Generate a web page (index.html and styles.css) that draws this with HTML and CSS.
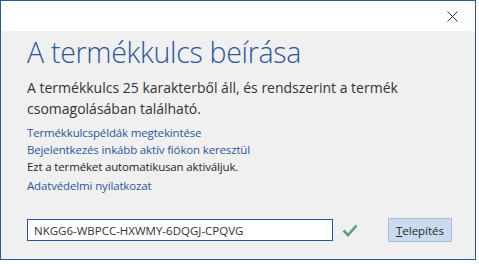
FILE: index.html
```html
<!DOCTYPE html>
<html lang="hu">
<head>
  <meta charset="UTF-8" />
  <title>A termékkulcs beírása</title>
  <link rel="stylesheet" href="styles.css">
</head>
<body>

  <div class="window">
    <!-- title bar -->
    <div class="titlebar">
      <svg class="close" width="11" height="11" viewBox="0 0 11 11">
        <path d="M0.5 0.5 L10.5 10.5 M10.5 0.5 L0.5 10.5" stroke="#333" stroke-width="1" fill="none"/>
      </svg>
    </div>

    <div class="content">
      <h1>A termékkulcs beírása</h1>
      <p class="intro">A termékkulcs 25 karakterből áll, és rendszerint a termék csomagolásában található.</p>

      <div class="links">
        <a href="#">Termékkulcspéldák megtekintése</a>
        <a href="#">Bejelentkezés inkább aktív fiókon keresztül</a>
        <span class="note">Ezt a terméket automatikusan aktiváljuk.</span>
        <a href="#" class="privacy">Adatvédelmi nyilatkozat</a>
      </div>

      <div class="key-row">
        <input type="text" class="key" value="NKGG6-WBPCC-HXWMY-6DQGJ-CPQVG" />
        <svg class="check" width="16" height="13" viewBox="0 0 16 13">
          <path d="M1.5 6.5 L6 11 L14.5 1.5" stroke="#5c9e80" stroke-width="2.6" fill="none"/>
        </svg>
        <button class="install"><u>T</u>elepítés</button>
      </div>
    </div>
  </div>

</body>
</html>
```

FILE: styles.css
```css
body {
  margin: 0;
  background: #ffffff;
  font-family: "Open Sans", "Noto Sans", sans-serif;
}
.window {
  width: 476px;
  height: 260px;
  box-sizing: border-box;
  border: 1px solid #2b579a;
  display: flex;
  flex-direction: column;
}
.titlebar {
  height: 30px;
  background: #ffffff;
  display: flex;
  justify-content: flex-end;
  align-items: center;
  padding-right: 17px;
}
.content {
  flex: 1;
  background: #f0f0f0;
  padding: 0 0 0 26px;
  display: flex;
  flex-direction: column;
}
h1 {
  margin: 3px 0 0 0;
  font-weight: 300;
  font-size: 28.5px;
  line-height: 36px;
  color: #2b579a;
  letter-spacing: -0.3px;
}
.intro {
  margin: 7px 0 0 0;
  width: 400px;
  font-size: 14px;
  line-height: 21px;
  color: #333333;
}
.links {
  margin-top: 5px;
  display: flex;
  flex-direction: column;
  font-size: 11.5px;
  line-height: 17px;
  letter-spacing: -0.15px;
}
.links a {
  color: #2b579a;
  text-decoration: none;
}
.note {
  color: #262626;
}
.links .privacy {
  margin-top: 2px;
}
.key-row {
  margin-top: 24px;
  display: flex;
  align-items: center;
}
.key {
  width: 306px;
  height: 22px;
  box-sizing: border-box;
  border: 1px solid #2b579a;
  padding: 0 6px;
  font-family: "Open Sans", "Noto Sans", sans-serif;
  font-size: 11.5px;
  color: #333333;
  background: #ffffff;
  margin: 0;
}
.check {
  margin-left: 9px;
}
.install {
  margin-left: 30px;
  width: 64px;
  height: 24px;
  background: #ccdaf0;
  border: 1px solid #a3bbe0;
  font-family: "Open Sans", "Noto Sans", sans-serif;
  font-size: 11.5px;
  color: #262626;
  padding: 0;
}
```
